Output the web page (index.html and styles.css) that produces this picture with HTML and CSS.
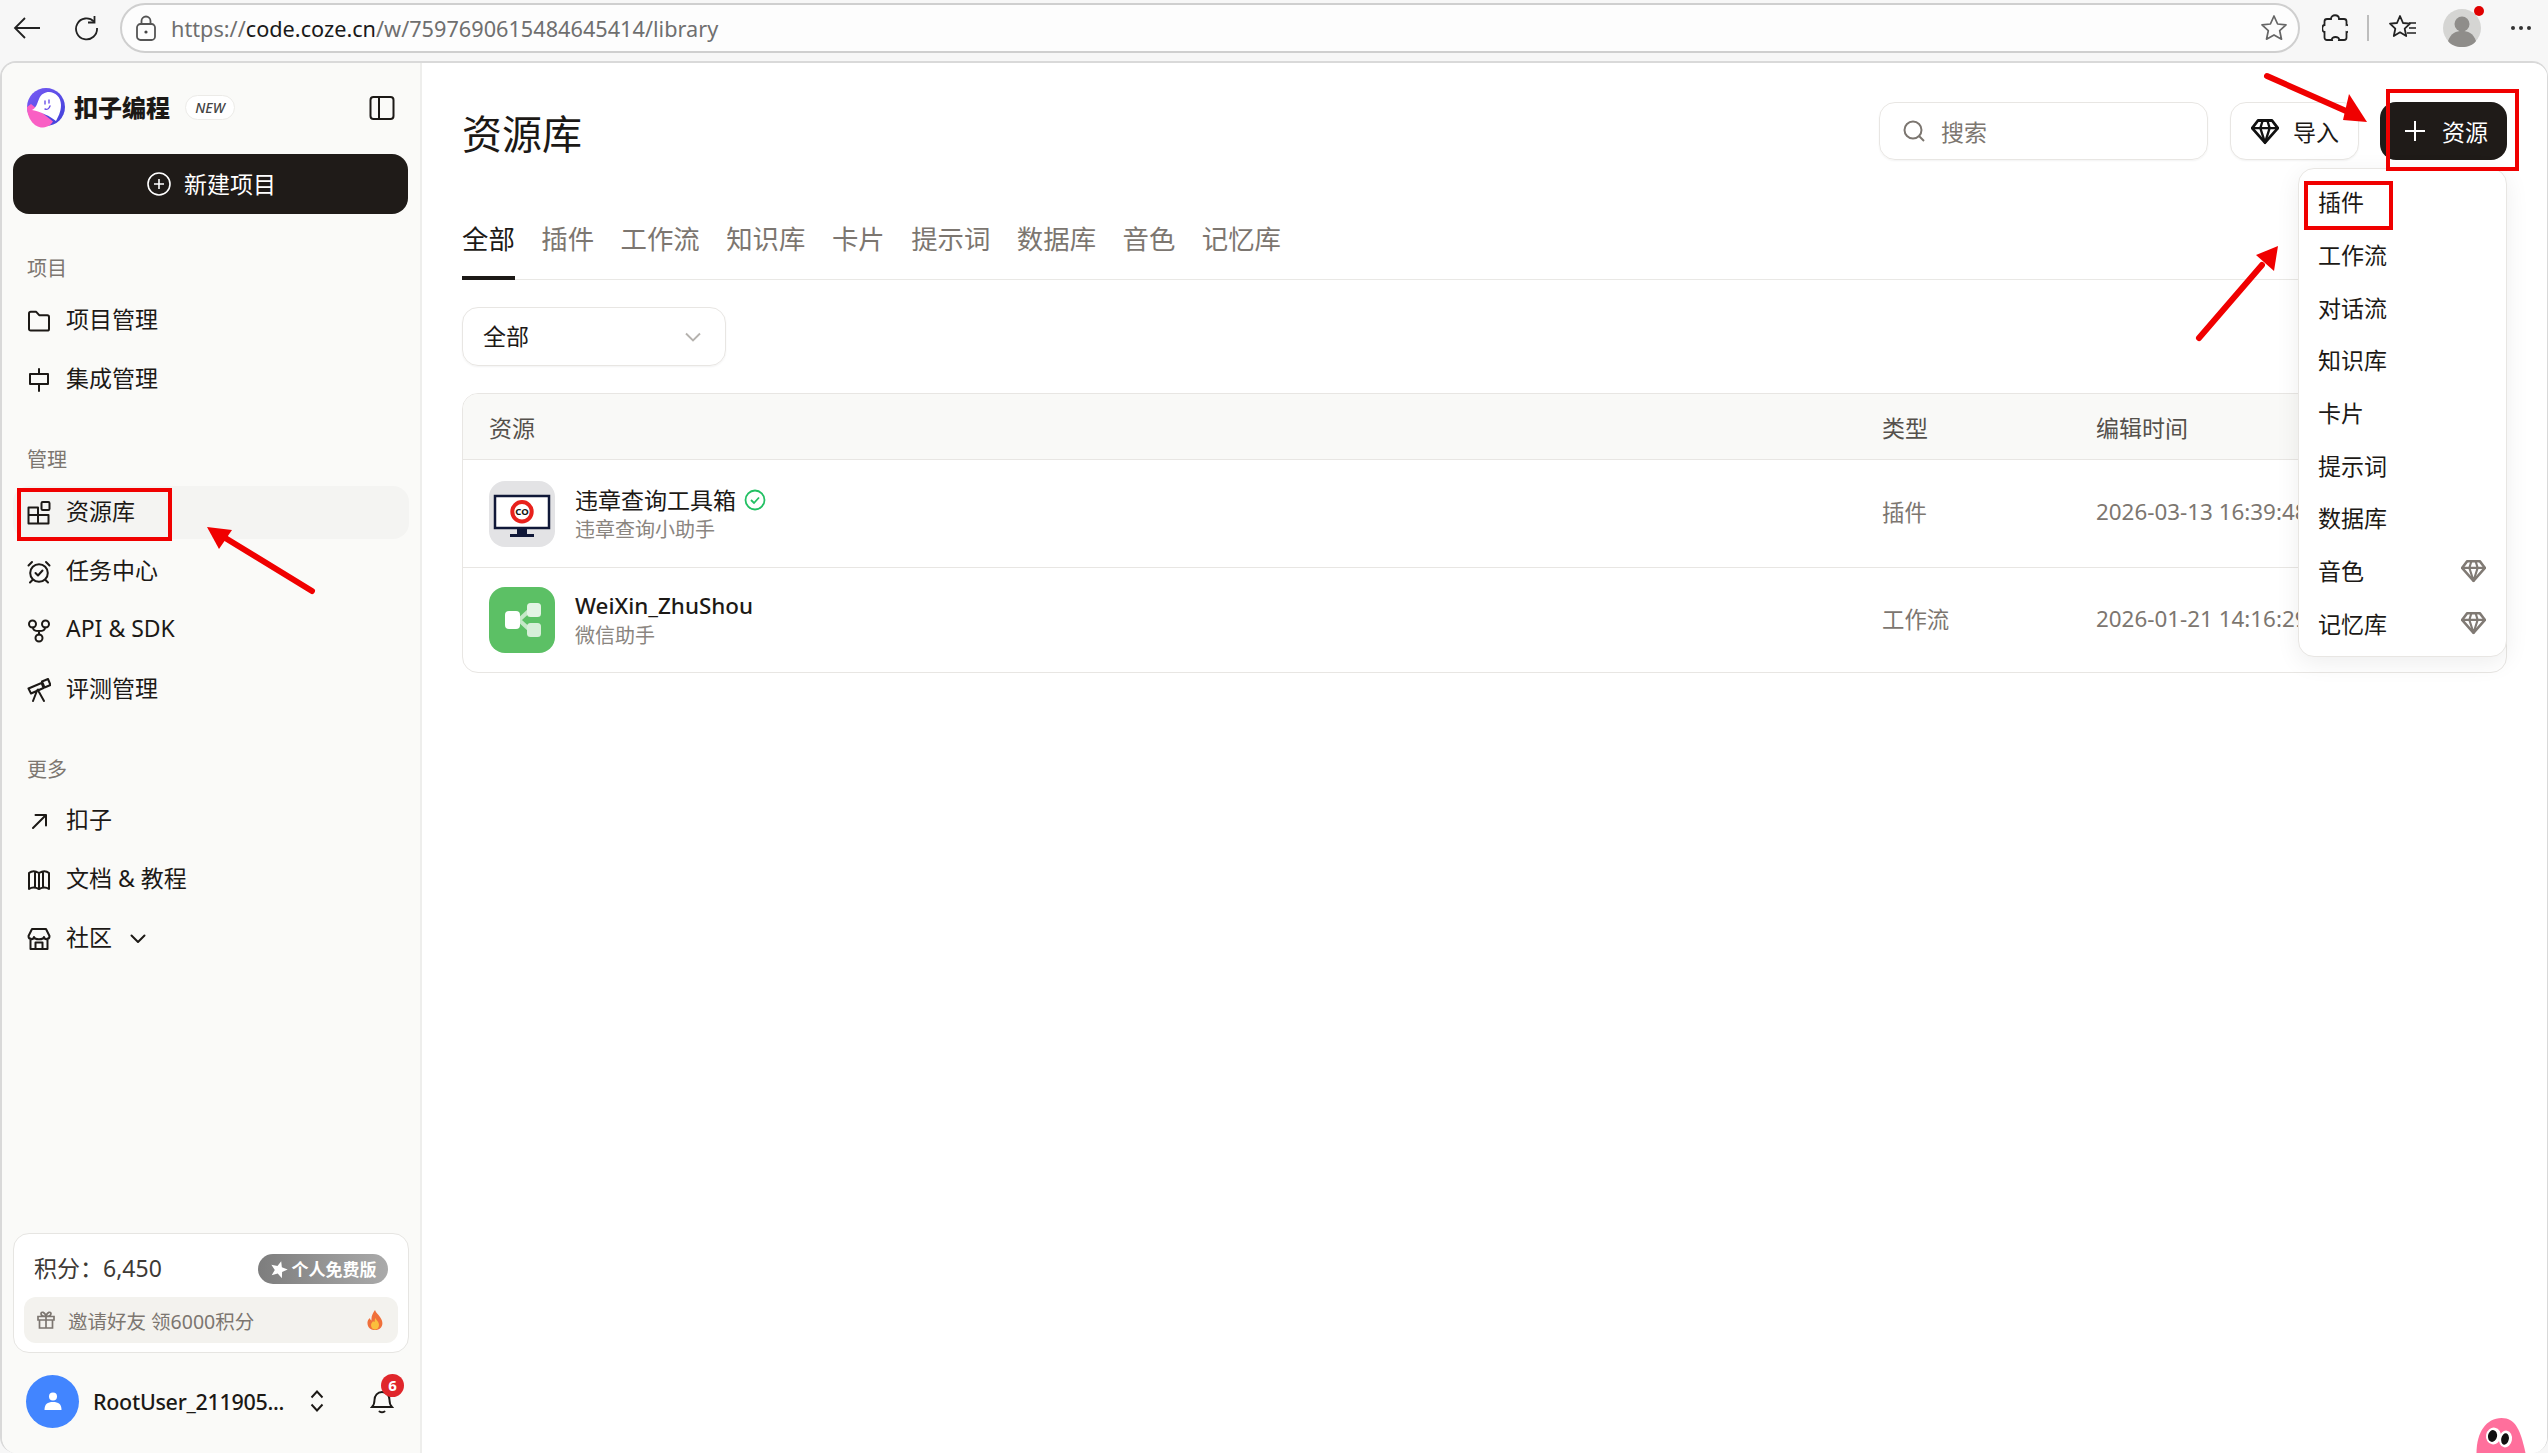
FILE: index.html
```html
<!DOCTYPE html>
<html lang="zh-CN">
<head>
<meta charset="utf-8">
<title>资源库</title>
<link rel="stylesheet" href="styles.css">
</head>
<body>
<svg width="0" height="0" class="defs">
  <defs>
    <g id="gem" fill="none" stroke="currentColor" stroke-linejoin="round" stroke-linecap="round">
      <path d="M6 3h12l5 6.500L12 22 1 9.500z" stroke-width="2.400"/>
      <path d="M1 9.500h22M8 9.500 12 22l4-12.500M8 9.500 10 3M16 9.500 14 3" stroke-width="2"/>
    </g>
  </defs>
</svg>
<div class="browser-bar">
  <svg class="chrome-icon back" viewBox="0 0 28 24" width="28" height="24"><path d="M27 12H2M12 2 2 12l10 10" fill="none" stroke="#222" stroke-width="1.800"/></svg>
  <svg class="chrome-icon reload" viewBox="0 0 24 26" width="24" height="26"><path d="M20 6.500A10.500 10.500 0 1 0 23 13" fill="none" stroke="#222" stroke-width="1.800"/><path d="M20.500 1v6.500H14" fill="none" stroke="#222" stroke-width="1.800"/></svg>
  <div class="address">
    <svg viewBox="0 0 20 26" width="20" height="26" class="lock"><rect x="1" y="9" width="18" height="16" rx="3.500" fill="none" stroke="#555" stroke-width="1.800"/><path d="M5.500 9V6a4.500 4.500 0 0 1 9 0v3" fill="none" stroke="#555" stroke-width="1.800"/><circle cx="10" cy="17" r="1.600" fill="#444"/></svg>
    <span class="url"><span class="url-dim">https://</span><span class="url-host">code.coze.cn</span><span class="url-dim">/w/7597690615484645414/library</span></span>
    <svg viewBox="0 0 28 28" width="28" height="28" class="addr-star"><path d="m14 2 3.600 8 8.400.9-6.300 5.800 1.800 8.500L14 20.900l-7.500 4.300 1.800-8.500L2 10.900l8.400-.9z" fill="none" stroke="#666" stroke-width="1.700" stroke-linejoin="round"/></svg>
  </div>
  <svg class="tool puzzle" viewBox="0 0 26 28" width="26" height="28"><path d="M9 5c0-5 8-5 8 0h5c1.500 0 2.500 1 2.500 2.500V11c4-1 4 8 0 7v5.500c0 1.500-1 2.500-2.500 2.500h-5c1-4-8-4-7 0H5c-1.500 0-2.500-1-2.500-2.500V18c-3 0-3-7 0-7V7.500C2.500 6 3.500 5 5 5z" fill="none" stroke="#222" stroke-width="1.800"/></svg>
  <span class="tool-sep"></span>
  <svg class="tool fav" viewBox="0 0 30 30" width="30" height="30"><path d="m12 3 3 7 7 .7-5.300 5 1.500 7.300-6.200-3.700L5.800 23l1.500-7.300-5.300-5 7-.7z" fill="none" stroke="#222" stroke-width="1.800" stroke-linejoin="round"/><path d="M21 10h7M21 15h7M19 20h9" stroke="#222" stroke-width="1.600"/></svg>
  <div class="profile">
    <svg viewBox="0 0 38 38" width="38" height="38"><circle cx="19" cy="19" r="19" fill="#d5d5d3"/><circle cx="19" cy="15" r="7.500" fill="#8f8d8a"/><path d="M5 32c3-8 8-10 14-10s11 2 14 10c-3 4-8 6-14 6S8 36 5 32z" fill="#8f8d8a"/></svg>
    <span class="profile-dot"></span>
  </div>
  <div class="dots"><i></i><i></i><i></i></div>
</div>

<div class="app">
  <aside class="sidebar">
    <div class="brand">
      <svg class="brand-logo" viewBox="0 0 40 40" width="40" height="40">
        <defs><linearGradient id="lg1" x1="0" y1="0" x2="1" y2="1"><stop offset="0" stop-color="#7a5cf5"/><stop offset="1" stop-color="#3d3fd8"/></linearGradient></defs>
        <circle cx="20" cy="19" r="19" fill="url(#lg1)"/>
        <path d="M1 19C1 30 8 40 17 39.500c5-.3 8-3 10-6L5 16z" fill="#f95fc4"/>
        <path d="M6 22C10 20 11 16 13 11 15 6 19 4 23 4c6 0 12 5 12 13 0 7-3 12-5 16C24 28 15 24 6 22z" fill="#fff"/>
        <path d="M19 21c2 1 4 0 5-3M23 12v3M19 13v3" fill="none" stroke="#6a50e8" stroke-width="1.400" stroke-linecap="round"/>
      </svg>
      <span class="brand-name">扣子编程</span>
      <span class="brand-new">NEW</span>
      <svg class="brand-toggle" viewBox="0 0 26 26" width="26" height="26"><rect x="1.500" y="2" width="23" height="22" rx="3" fill="none" stroke="#1c1916" stroke-width="2"/><path d="M10 2v22" stroke="#1c1916" stroke-width="2"/></svg>
    </div>
    <button class="new-project">
      <svg viewBox="0 0 24 24" width="24" height="24"><circle cx="12" cy="12" r="11" fill="none" stroke="#fff" stroke-width="1.600"/><path d="M12 7v10M7 12h10" stroke="#fff" stroke-width="1.600"/></svg>
      <span>新建项目</span>
    </button>

    <div class="nav-label nav-label-first">项目</div>
    <a class="nav-item"><svg viewBox="0 0 24 24" width="24" height="24"><path d="M2 4.500c0-1 .7-1.700 1.700-1.700h5.500l3 3.400h8.100c1 0 1.700.7 1.700 1.700v12c0 1-.7 1.700-1.700 1.700H3.700c-1 0-1.700-.7-1.700-1.700z" class="ic"/></svg><span>项目管理</span></a>
    <a class="nav-item"><svg viewBox="0 0 24 24" width="24" height="24"><path d="M12 1v5M12 16v7M3 6h18v10H3z" class="ic"/></svg><span>集成管理</span></a>

    <div class="nav-label nav-label-mid">管理</div>
    <a class="nav-item active"><svg viewBox="0 0 24 24" width="24" height="24"><path d="M1.500 6.500h9.500v16H1.500zM1.500 14h20v8.500H11M11 14V6.500" class="ic"/><rect x="14.500" y="1" width="8" height="8" rx="1.200" class="ic"/></svg><span>资源库</span></a>
    <a class="nav-item"><svg viewBox="0 0 24 24" width="24" height="24"><circle cx="12" cy="13" r="8.800" class="ic"/><path d="m8.500 13 2.500 2.500 4.500-5M1.500 5.500l3.500-3.500M22.500 5.500 19 2M5.500 20 3 22.500M18.500 20l2.500 2.500" class="ic"/></svg><span>任务中心</span></a>
    <a class="nav-item"><svg viewBox="0 0 24 24" width="24" height="24"><circle cx="5.500" cy="5" r="3.500" class="ic"/><circle cx="18.500" cy="5" r="3.500" class="ic"/><circle cx="12" cy="19" r="3.500" class="ic"/><path d="M6 8.500c0 3 2 3.500 6 3.500s6-.5 6-3.500M12 12v3.500" class="ic"/></svg><span>API &amp; SDK</span></a>
    <a class="nav-item"><svg viewBox="0 0 24 24" width="24" height="24"><path d="m1.500 10.500 13-5.500 2 5L4 15.500zM15 3.500l6-2.500 2.500 6-6 2.500zM12 14l5 9M9.500 14 6 23" class="ic"/><circle cx="11" cy="12" r="1.500" fill="#1c1916"/></svg><span>评测管理</span></a>

    <div class="nav-label nav-label-more">更多</div>
    <a class="nav-item"><svg viewBox="0 0 24 24" width="24" height="24"><path d="M6 19 19 6M8.500 6H19v10.500" class="ic"/></svg><span>扣子</span></a>
    <a class="nav-item"><svg viewBox="0 0 24 24" width="24" height="24"><path d="M2 5c3-2.500 6-2.500 10 0 4-2.500 7-2.500 10 0v16c-3-2-6-2-10 0-4-2-7-2-10 0zM8 3.500v15.500M12 5v16M16 3.500v15.500" class="ic"/></svg><span>文档 &amp; 教程</span></a>
    <a class="nav-item"><svg viewBox="0 0 24 24" width="24" height="24"><path d="M5 2h14l3.500 7c0 4-5 4-5.500 1-.5 3-9.500 3-10 0-.5 3-5.500 3-5.500-1zM3.500 11.500V22h17V11.500M8.500 22v-6.500h7V22" class="ic"/></svg><span>社区</span><svg class="nav-caret" viewBox="0 0 16 16" width="16" height="16"><path d="m1.500 4.500 6.500 6.500 6.500-6.500" class="ic"/></svg></a>

    <div class="credits">
      <div class="credits-top">
        <span class="credits-num">积分：6,450</span>
        <span class="credits-plan"><svg viewBox="0 0 18 18" width="18" height="18"><path d="M9 1l2.300 5.600 6.200.5-4.700 3.900 1.500 6L9 13.800 3.700 17l1.500-6L.5 7.100l6.200-.5z" fill="#fff" transform="rotate(16 9 9)"/></svg>个人免费版</span>
      </div>
      <div class="invite">
        <svg viewBox="0 0 20 20" width="20" height="20"><path d="M2 6.500h16v3.500H2zM3.500 10v8h13v-8M10 6.500V18M10 6.500C7 6.500 5 5.500 5 3.500S9 1.500 10 6.500c1-5 5-5 5-3s-2 3-5 3" fill="none" stroke="#7c7670" stroke-width="1.700"/></svg>
        <span>邀请好友 领6000积分</span>
        <svg class="flame" viewBox="0 0 16 20" width="16" height="20"><path d="M8 0c1 3 3 4 5 7 3 4 3 8 1 10.500-1.500 2-4 2.500-6 2.500s-5-.5-6.500-3C-.5 13.500.5 9.500 3 8c0 1 .5 2 1.500 2.500C4 6 6 3 8 0z" fill="#f0703a"/><path d="M8.500 8c.5 2 3.500 3.500 3.500 7 0 3-2 4.500-4 4.500S4 18 4 15c0-2 1.500-2.500 2-4 .5.500 1 1 1.500 1 .5-1.500 0-2.500 1-4z" fill="#fbbf3c"/></svg>
      </div>
    </div>
    <div class="user">
      <div class="user-avatar"><svg viewBox="0 0 20 20" width="20" height="20"><circle cx="10" cy="5.500" r="4" fill="#fff"/><path d="M1.500 19c0-6 3-8 8.500-8s8.500 2 8.500 8z" fill="#fff"/></svg></div>
      <span class="user-name">RootUser_211905...</span>
      <svg class="updown" viewBox="0 0 14 22" width="14" height="22"><path d="m1.500 7.500 5.500-6 5.500 6M1.500 14.500l5.500 6 5.500-6" fill="none" stroke="#1c1916" stroke-width="1.900"/></svg>
      <div class="bell">
        <svg viewBox="0 0 24 26" width="24" height="26"><path d="M2 19c2-2 2.500-4 2.500-7 0-4.500 3-8 7.500-8s7.500 3.500 7.500 8c0 3 .5 5 2.500 7zM9.500 23.500c1.500 1 3.500 1 5 0" fill="none" stroke="#1c1916" stroke-width="1.900" stroke-linecap="round"/></svg>
        <span class="bell-badge">6</span>
      </div>
    </div>
  </aside>

  <main class="main">
    <header class="head">
      <h1 class="title">资源库</h1>
      <div class="actions">
        <div class="search">
          <svg viewBox="0 0 24 24" width="24" height="24"><circle cx="11" cy="11" r="8.500" fill="none" stroke="#7c7670" stroke-width="2"/><path d="m17 17 5 5" stroke="#7c7670" stroke-width="2"/></svg>
          <span>搜索</span>
        </div>
        <button class="btn-import">
          <svg viewBox="0 0 24 24" width="28" height="28" class="gem-dark"><use href="#gem"/></svg>
          <span>导入</span>
        </button>
        <button class="btn-add">
          <svg viewBox="0 0 20 20" width="20" height="20"><path d="M10 0v20M0 10h20" stroke="#fff" stroke-width="2"/></svg>
          <span>资源</span>
        </button>
      </div>
    </header>

    <nav class="tabs">
      <a class="tab tab-on">全部</a><a class="tab">插件</a><a class="tab">工作流</a><a class="tab">知识库</a><a class="tab">卡片</a><a class="tab">提示词</a><a class="tab">数据库</a><a class="tab">音色</a><a class="tab">记忆库</a>
    </nav>

    <div class="select">
      <span>全部</span>
      <svg viewBox="0 0 16 10" width="16" height="10"><path d="m1 1.500 7 7 7-7" fill="none" stroke="#b5b2ae" stroke-width="1.900"/></svg>
    </div>

    <section class="table">
      <div class="row row-head"><span>资源</span><span>类型</span><span>编辑时间</span></div>
      <div class="row row-body">
        <div class="res">
          <svg class="res-icon" viewBox="0 0 66 66" width="66" height="66">
            <rect width="66" height="66" rx="16" fill="#e3e3e5"/>
            <rect x="6" y="15" width="54" height="32" fill="#fff" stroke="#101838" stroke-width="2.500"/>
            <rect x="28" y="47" width="10" height="7" fill="#101838"/>
            <rect x="21" y="53" width="24" height="3" fill="#101838"/>
            <circle cx="33" cy="30.700" r="9.700" fill="#fff" stroke="#e8211c" stroke-width="4"/>
            <text x="33" y="34.300" class="co">CO</text>
          </svg>
          <div class="res-text">
            <div class="res-name">违章查询工具箱<svg class="ok" viewBox="0 0 22 22" width="22" height="22"><circle cx="11" cy="11" r="9.500" fill="none" stroke="#22c063" stroke-width="1.800"/><path d="m7 11 3 3 5-5.500" fill="none" stroke="#22c063" stroke-width="1.800"/></svg></div>
            <div class="res-sub">违章查询小助手</div>
          </div>
        </div>
        <span class="cell">插件</span><span class="cell">2026-03-13 16:39:48</span>
      </div>
      <div class="row row-body">
        <div class="res">
          <svg class="res-icon" viewBox="0 0 66 66" width="66" height="66">
            <rect width="66" height="66" rx="16" fill="#5cc065"/>
            <path d="M30 33 43 21M30 33l13 12" stroke="#c5e8c8" stroke-width="4"/>
            <rect x="16" y="24" width="15" height="18" rx="4" fill="#fff"/>
            <rect x="38" y="16" width="14" height="14" rx="3.500" fill="#e3f4e4"/>
            <rect x="38" y="36" width="14" height="14" rx="3.500" fill="#d6efd8"/>
          </svg>
          <div class="res-text">
            <div class="res-name res-name-latin">WeiXin_ZhuShou</div>
            <div class="res-sub">微信助手</div>
          </div>
        </div>
        <span class="cell">工作流</span><span class="cell">2026-01-21 14:16:29</span>
      </div>
    </section>

    <div class="menu">
      <div class="menu-item">插件</div>
      <div class="menu-item">工作流</div>
      <div class="menu-item">对话流</div>
      <div class="menu-item">知识库</div>
      <div class="menu-item">卡片</div>
      <div class="menu-item">提示词</div>
      <div class="menu-item">数据库</div>
      <div class="menu-item"><span>音色</span><svg viewBox="0 0 24 24" width="25" height="25" class="gem-grey"><use href="#gem"/></svg></div>
      <div class="menu-item"><span>记忆库</span><svg viewBox="0 0 24 24" width="25" height="25" class="gem-grey"><use href="#gem"/></svg></div>
    </div>

    <svg class="mascot" viewBox="0 0 49 35" width="52" height="35">
      <path d="M0 35C0 14 10 0 25 0c14 0 19 12 24 35z" fill="#ff6f9c"/>
      <ellipse cx="17" cy="18" rx="7.500" ry="8.500" fill="#fff" transform="rotate(10 17 18)"/>
      <ellipse cx="29" cy="21" rx="6.500" ry="8.500" fill="#fff" transform="rotate(10 29 21)"/>
      <ellipse cx="16" cy="18" rx="4.500" ry="6" fill="#111" transform="rotate(12 16 18)"/>
      <ellipse cx="28.500" cy="21" rx="3.800" ry="5.800" fill="#111" transform="rotate(12 28.500 21)"/>
    </svg>
  </main>
</div>

<svg class="marks" viewBox="0 0 2548 1453" width="2548" height="1453">
  <g fill="none" stroke="#f00000" stroke-width="4">
    <rect x="19" y="490" width="151" height="49"/>
    <rect x="2388" y="91" width="129" height="78"/>
    <rect x="2306" y="183" width="85" height="45"/>
  </g>
  <g stroke="#f00000" stroke-width="6" stroke-linecap="round" fill="#f00000">
    <path d="M2267 76 2346 111"/><path d="M2367 122 2349 94 2343 120z" stroke="none"/>
    <path d="M2199 338 2262 265"/><path d="M2278 246 2256 255 2274 271z" stroke="none"/>
    <path d="M312 591 222 536"/><path d="M207 527 232 530 219 549z" stroke="none"/>
  </g>
</svg>
</body>
</html>
```
FILE: styles.css
```css
* { box-sizing: border-box; }
html, body { margin: 0; padding: 0; }
body {
  position: relative;
  width: 2548px;
  height: 1453px;
  overflow: hidden;
  display: flex;
  flex-direction: column;
  background: #f7f7f7;
  color: #1c1916;
  font-family: "Noto Sans", "Noto Sans CJK SC", sans-serif;
  font-size: 23px;
}
.defs { position: absolute; }

/* browser chrome */
.browser-bar {
  height: 61px;
  flex: none;
  display: flex;
  align-items: center;
  padding: 0 18px 5px 13px;
}
.chrome-icon { flex: none; }
.reload { margin-left: 33px; }
.address {
  flex: none;
  margin-left: 22px;
  width: 2180px;
  height: 50px;
  display: flex;
  align-items: center;
  padding: 0 10px 0 14px;
  border: 2px solid #cfcfcf;
  border-radius: 25px;
  background: #fdfdfd;
}
.lock { flex: none; }
.url { margin-left: 15px; font-size: 21.700px; white-space: nowrap; }
.url-dim { color: #6f6f6f; }
.url-host { color: #1a1a1a; }
.addr-star { margin-left: auto; }
.tool { flex: none; }
.puzzle { margin-left: 22px; }
.tool-sep { flex: none; width: 2px; height: 26px; background: #bdbdbd; margin-left: 19px; }
.fav { margin-left: 19px; }
.profile { position: relative; flex: none; margin-left: 25px; width: 38px; height: 38px; }
.profile svg { display: block; }
.profile-dot {
  position: absolute; top: -3px; right: -3px;
  width: 10px; height: 10px; border-radius: 50%; background: #e00000;
}
.dots { display: flex; flex: none; gap: 4px; margin-left: 30px; }
.dots i { width: 4px; height: 4px; border-radius: 50%; background: #333; }

/* frame */
.app {
  position: relative;
  flex: 1;
  min-height: 0;
  display: flex;
  border: 2px solid #d9d9d9;
  border-bottom: 0;
  border-right-width: 1px;
  border-radius: 16px;
  overflow: hidden;
  background: #fff;
}

/* sidebar */
.sidebar {
  flex: none;
  width: 420px;
  height: 100%;
  display: flex;
  flex-direction: column;
  padding: 0 11px;
  background: #fafaf8;
  border-right: 2px solid #eeeeec;
}
.brand {
  height: 91px;
  flex: none;
  display: flex;
  align-items: center;
  padding: 0 14px 2px 13px;
}
.brand-name { margin-left: 8px; font-size: 24px; font-weight: 900; white-space: nowrap; line-height: 1; }
.brand-new {
  margin-left: 15px;
  width: 50px; height: 25px;
  display: flex; align-items: center; justify-content: center;
  font-size: 14px; font-style: italic; font-weight: 500;
  color: #444;
  background: #fff;
  border: 1px solid #ecebe8;
  border-radius: 13px;
}
.brand-toggle { margin-left: auto; }
.new-project {
  flex: none;
  height: 60px;
  width: 395px;
  display: flex; align-items: center; justify-content: center; gap: 13px;
  border: 0; border-radius: 16px;
  background: #1f1b18;
  color: #fff;
  font: inherit;
  padding: 0 0 0 2px;
}
.new-project span { padding-bottom: 2px; }
.nav-label {
  flex: none;
  height: 30px;
  line-height: 30px;
  padding-left: 14px;
  font-size: 20px;
  color: #7c7670;
}
.nav-label-first { margin-top: 40px; margin-bottom: 10px; }
.nav-label-mid { margin-top: 33px; margin-bottom: 11px; }
.nav-label-more { margin-top: 33px; margin-bottom: 9px; }
.nav-item {
  flex: none;
  height: 53px;
  display: flex;
  align-items: center;
  gap: 15px;
  padding-left: 14px;
  border-radius: 16px;
  margin-bottom: 6px;
  white-space: nowrap;
}
.nav-item span { padding-bottom: 5px; }
.nav-item.active { background: #f4f4f2; }
.nav-item svg { flex: none; }
.nav-caret { margin-left: 3px; }
.ic { fill: none; stroke: #1c1916; stroke-width: 2; stroke-linejoin: round; stroke-linecap: round; }

.credits {
  flex: none;
  margin-top: auto;
  height: 120px;
  background: #fff;
  border: 1px solid #e6e5e2;
  border-radius: 16px;
  padding: 0 10px;
}
.credits-top {
  height: 63px;
  display: flex; align-items: center; justify-content: space-between;
  padding: 6px 10px 0 10px;
}
.credits-num { color: #3d3935; padding-bottom: 4px; }
.credits-plan {
  width: 130px; height: 30px;
  display: flex; align-items: center; justify-content: center; gap: 4px;
  border-radius: 15px;
  background: linear-gradient(90deg, #7d7d7d, #aaaaaa);
  color: #fff; font-size: 17px; font-weight: 700; white-space: nowrap;
}
.invite {
  height: 46px;
  display: flex; align-items: center; gap: 12px;
  padding: 0 15px 0 12px;
  border-radius: 12px;
  background: #f3f2ee;
  color: #7c7670;
  font-size: 19.500px;
}
.flame { margin-left: auto; }
.user {
  flex: none;
  height: 100px;
  display: flex; align-items: center;
  padding: 0 0 4px 13px;
}
.user-avatar {
  width: 53px; height: 53px; flex: none;
  display: flex; align-items: center; justify-content: center;
  border-radius: 50%; background: #4285ff;
}
.user-name { margin-left: 14px; width: 204px; font-size: 21.500px; letter-spacing: -.3px; font-weight: 500; white-space: nowrap; }
.updown { flex: none; margin-left: 13px; }
.bell { position: relative; flex: none; margin-left: 46px; width: 24px; height: 26px; }
.bell svg { display: block; }
.bell-badge {
  position: absolute; top: -14px; left: 11px;
  width: 23px; height: 23px;
  display: flex; align-items: center; justify-content: center;
  border-radius: 50%; background: #e0262b; color: #fff;
  font-size: 15px; font-weight: 700; line-height: 1;
}

/* main */
.main {
  position: relative;
  flex: 1;
  min-width: 0;
  padding: 0 40px;
  background: #fff;
}
.head {
  height: 97px;
  display: flex;
  align-items: flex-end;
  justify-content: space-between;
}
.title { margin: 0 0 -3px; height: 58px; line-height: 58px; font-size: 40px; font-weight: 400; color: #1c1916; }
.actions { display: flex; align-items: center; }
.search {
  width: 329px; height: 58px;
  display: flex; align-items: center; gap: 15px;
  padding-left: 22px;
  border: 1px solid #e8e6e3; border-radius: 16px;
  box-shadow: 0 1px 2px rgba(0,0,0,.05);
  color: #7c7670;
}
.search span, .btn-import span, .btn-add span { padding-bottom: 1px; }
.btn-import {
  margin-left: 22px;
  width: 129px; height: 58px;
  display: flex; align-items: center; gap: 14px;
  padding: 0 0 0 20px;
  border: 1px solid #e8e6e3; border-radius: 16px;
  background: #fff;
  box-shadow: 0 1px 2px rgba(0,0,0,.05);
  font: inherit; color: #1c1916;
}
.gem-dark { color: #111; }
.gem-grey { color: #807a74; }
.btn-add {
  margin-left: 21px;
  width: 127px; height: 58px;
  display: flex; align-items: center; gap: 17px;
  padding: 0 0 0 25px;
  border: 0; border-radius: 16px;
  background: #1f1b18;
  font: inherit; color: #fff;
}
.tabs {
  margin-top: 54px;
  height: 66px;
  display: flex;
  gap: 26.500px;
  border-bottom: 1px solid #e9e8e5;
}
.tab {
  height: 66px;
  padding-top: 7px;
  line-height: 36px;
  font-size: 26.400px;
  color: #7c7670;
  white-space: nowrap;
}
.tab-on { color: #1c1916; border-bottom: 4px solid #1c1916; }
.select {
  margin-top: 27px;
  width: 264px; height: 59px;
  display: flex; align-items: center; justify-content: space-between;
  padding: 0 24px 0 20px;
  border: 1px solid #e8e6e3; border-radius: 16px;
  box-shadow: 0 1px 2px rgba(0,0,0,.05);
}
.select span { padding-bottom: 4px; }
.table {
  margin-top: 27px;
  height: 280px;
  border: 1px solid #e8e6e3;
  border-radius: 16px;
  overflow: hidden;
}
.row {
  display: grid;
  grid-template-columns: 1393px 214px 1fr;
  align-items: center;
  padding-left: 26px;
  white-space: nowrap;
}
.row-head { height: 65px; background: #f9f9f7; color: #55514c; }
.row-body { height: 108px; border-top: 1px solid #e8e6e3; color: #1c1916; }
.row-body + .row-body { height: 105px; }
.res { display: flex; align-items: center; gap: 20px; }
.res-icon { flex: none; }
.res-name { display: flex; align-items: center; gap: 8px; line-height: 32px; height: 32px; }
.res-name-latin { font-size: 22.400px; font-weight: 500; }
.res-sub { font-size: 20px; color: #8a8580; line-height: 28px; }
.cell { color: #7c7670; padding-bottom: 4px; font-size: 22.400px; }
.co { font-family: "Noto Sans", sans-serif; font-size: 9.500px; font-weight: 700; text-anchor: middle; fill: #111; }
.menu {
  position: absolute;
  top: 105px;
  left: 1876px;
  width: 209px;
  height: 489px;
  padding: 8px 20px 0 19px;
  background: #fff;
  border: 1px solid #e8e6e3;
  border-radius: 16px;
  box-shadow: 0 6px 24px rgba(0,0,0,.07);
}
.menu-item {
  height: 52.700px;
  padding-bottom: 4px;
  display: flex; align-items: center; justify-content: space-between;
}
.mascot { position: absolute; right: 20px; bottom: 0; }

/* annotation layer */
.marks { position: absolute; top: 0; left: 0; pointer-events: none; }
```
